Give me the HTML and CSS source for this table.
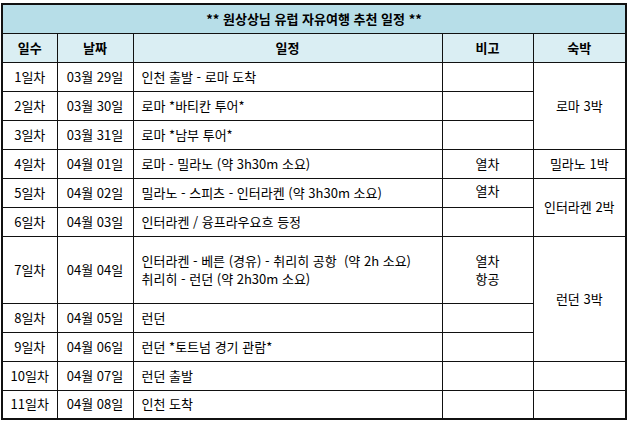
FILE: index.html
```html
<!DOCTYPE html>
<html lang="ko">
<head>
<meta charset="utf-8">
<link rel="stylesheet" href="styles.css">
</head>
<body>
<table class="plan">
  <colgroup>
    <col class="c-day"><col class="c-date"><col class="c-plan"><col class="c-note"><col class="c-stay">
  </colgroup>
  <tr class="title"><td colspan="5">** 원상상님 유럽 자유여행 추천 일정 **</td></tr>
  <tr class="head"><td>일수</td><td>날짜</td><td>일정</td><td>비고</td><td>숙박</td></tr>
  <tr><td>1일차</td><td>03월 29일</td><td class="left">인천 출발 - 로마 도착</td><td></td><td rowspan="3">로마 3박</td></tr>
  <tr><td>2일차</td><td>03월 30일</td><td class="left">로마 *바티칸 투어*</td><td></td></tr>
  <tr><td>3일차</td><td>03월 31일</td><td class="left">로마 *남부 투어*</td><td></td></tr>
  <tr><td>4일차</td><td>04월 01일</td><td class="left">로마 - 밀라노 (약 3h30m 소요)</td><td>열차</td><td>밀라노 1박</td></tr>
  <tr><td>5일차</td><td>04월 02일</td><td class="left">밀라노 - 스피츠 - 인터라켄 (약 3h30m 소요)</td><td class="top">열차</td><td rowspan="2">인터라켄 2박</td></tr>
  <tr><td>6일차</td><td>04월 03일</td><td class="left">인터라켄 / 융프라우요흐 등정</td><td></td></tr>
  <tr class="tall"><td>7일차</td><td>04월 04일</td><td class="left">인터라켄 - 베른 (경유) - 취리히 공항&nbsp; (약 2h 소요)<br>취리히 - 런던 (약 2h30m 소요)</td><td>열차<br>항공</td><td rowspan="3">런던 3박</td></tr>
  <tr><td>8일차</td><td>04월 05일</td><td class="left">런던</td><td></td></tr>
  <tr><td>9일차</td><td>04월 06일</td><td class="left">런던 *토트넘 경기 관람*</td><td></td></tr>
  <tr><td>10일차</td><td>04월 07일</td><td class="left">런던 출발</td><td></td><td></td></tr>
  <tr><td>11일차</td><td>04월 08일</td><td class="left">인천 도착</td><td></td><td></td></tr>
</table>
</body>
</html>
```

FILE: styles.css
```css
html, body {
  margin: 0;
  padding: 0;
  background: #ffffff;
}
body {
  padding: 3px 0 0 1px;
  font-family: "Noto Sans CJK KR", "Noto Sans", sans-serif;
  font-size: 13px;
  color: #000000;
}
.plan {
  border-collapse: collapse;
  table-layout: fixed;
  width: 624px;
  border: 2px solid #111;
}
.c-day { width: 55px; }
.c-date { width: 76px; }
.c-plan { width: 309px; }
.c-note { width: 91px; }
.c-stay { width: 93px; }
.plan tr {
  height: 29px;
}
.plan tr.tall {
  height: 67px;
}
.plan td {
  border: 1px solid #111;
  padding: 0;
  text-align: center;
  vertical-align: middle;
  line-height: 18px;
  white-space: nowrap;
}
.plan td.left {
  text-align: left;
  padding-left: 8px;
}
.plan td.top {
  vertical-align: top;
  padding-top: 3px;
}
.title td {
  background: #b7dee8;
  font-weight: bold;
}
.head td {
  background: #daeef3;
  font-weight: bold;
}
```
